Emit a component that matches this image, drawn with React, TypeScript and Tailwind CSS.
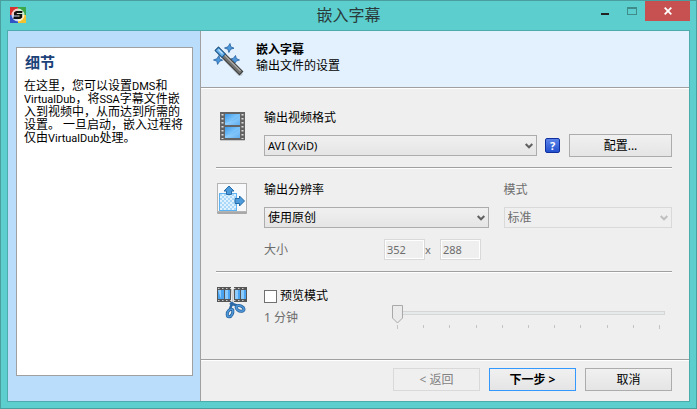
import { useState } from 'react'
import type { ReactNode, SelectHTMLAttributes, ButtonHTMLAttributes } from 'react'
import clsx from 'clsx'

const TICKS = [0, 1, 2, 3, 4, 5, 6, 7, 8, 9, 10]

function AppLogo() {
  return (
    <svg width="16" height="16" viewBox="0 0 16 16" aria-hidden="true">
      <rect width="8" height="8" fill="#d8322e" />
      <rect x="8" width="8" height="8" fill="#3aa848" />
      <rect y="8" width="8" height="8" fill="#2f52c4" />
      <rect x="8" y="8" width="8" height="8" fill="#f2c230" />
      <circle cx="8" cy="8" r="6.5" fill="#fff" opacity="0.75" />
      <path d="M12.500 4H6L4 5.500v3h5.500v1H3.800L3.300 12h6.900l2-1.600V7H6.800V6h5.300z" fill="#111" />
    </svg>
  )
}

function WandIcon() {
  return (
    <svg width="32" height="34" viewBox="0 0 32 34" aria-hidden="true">
      <path d="M7 11l20 21" stroke="#b4c0ca" strokeWidth="5" strokeLinecap="round" opacity="0.6" />
      <g fill="#4c97da" stroke="#24609f" strokeWidth="0.8">
        <path d="M17 1.500l.8 3.200 3.200 1.500-3.300 1-1.800 3.300-1-3.200L11.500 6l3.500-1.200z" />
        <path d="M6 13.500l.6 3.200 3 1.500-3 1-2 3.200-.8-3.300L.5 18l3.300-1.200z" />
        <path d="M22.500 13.500l.8 3 3.200 1.500-3.200 1-2 3-.8-3.200L17.500 17l3-.8z" />
      </g>
      <path d="M5.500 8.500l21 21" stroke="#3c3c3c" strokeWidth="5.600" strokeLinecap="square" />
      <path d="M5.500 8.500l21 21" stroke="#70706e" strokeWidth="3.600" strokeLinecap="square" />
      <path d="M7 8.500l20.500 20.500" stroke="#adadaa" strokeWidth="1.300" />
      <path d="M5.500 8.500l3.500 3.500" stroke="#1d5c96" strokeWidth="5.600" strokeLinecap="square" />
      <path d="M5.500 8.500l3.500 3.500" stroke="#69b3ea" strokeWidth="3.600" strokeLinecap="square" />
      <path d="M5.500 7.500l4 4" stroke="#c3e4fb" strokeWidth="1.300" />
    </svg>
  )
}

function FilmIcon() {
  return (
    <svg width="26" height="32" viewBox="0 0 26 32" aria-hidden="true">
      <defs>
        <linearGradient id="film" x1="0" y1="0" x2="1" y2="1">
          <stop offset="0" stopColor="#3d9bea" />
          <stop offset="0.5" stopColor="#7cc4fa" />
          <stop offset="1" stopColor="#2f8be0" />
        </linearGradient>
      </defs>
      <rect y="3" width="25" height="28" rx="1" fill="#c9c9c9" />
      <rect y="2" width="25" height="28" fill="#646464" />
      <rect x="5" y="4" width="15" height="11" fill="url(#film)" />
      <rect x="5" y="17" width="15" height="11" fill="url(#film)" />
      <path d="M5 13c6-1 11-3 15-7v9H5zM5 26c6-1 11-3 15-7v9H5z" fill="#9fd6ff" opacity="0.45" />
      <path d="M2.500 4v25M22.500 4v25" stroke="#ddd" strokeWidth="2" strokeDasharray="1.500 2.500" />
    </svg>
  )
}

function ResizeIcon() {
  return (
    <svg width="32" height="32" viewBox="0 0 32 32" aria-hidden="true">
      <defs>
        <pattern id="checker" width="4" height="4" patternUnits="userSpaceOnUse">
          <rect width="4" height="4" fill="#e0f2ff" />
          <path d="M0 0h2v2H0zM2 2h2v2H2z" fill="#aad8f8" />
        </pattern>
      </defs>
      <rect x="1" y="2" width="30" height="30" rx="1" fill="#a9a9a9" />
      <rect x="1.500" y="1.500" width="29" height="28" fill="#f7f9fa" stroke="#b4b4b4" />
      <rect x="3.500" y="11.500" width="17" height="17" fill="url(#checker)" stroke="#5eb2f0" />
      <g fill="#4d9bdb" stroke="#256ca8">
        <path d="M13 4l5 5h-2.500v3.500h-5V9H8z" />
        <path d="M28.500 19l-5 5v-2.500H19v-5h4.500V14z" />
      </g>
    </svg>
  )
}

function CutFilmIcon() {
  return (
    <svg width="32" height="34" viewBox="0 0 32 34" aria-hidden="true">
      <path d="M1 1h30v15H1z" fill="#555" />
      <path d="M2 2.500h28M2 14.500h28" stroke="#ccc" strokeDasharray="1.500 2.500" />
      <path d="M2 4h6v9H2zM9 4h5v9H9zM19 4h5v9h-5zM25 4h5v9h-5z" fill="#4aa3ee" />
      <path d="M2 4h3v9zM9 4h3v9H9zM19 4h3v9h-3zM25 4h3v9h-3z" fill="#8ccbfb" />
      <path d="M15 1h3v16h-3z" fill="#efefef" />
      <path d="M15.500 3l1.500 14M17.500 3l-1 14" stroke="#c6c6c6" />
      <path d="M16.500 16l-2.500 7M16.500 18l4.500 1.500M14 17l3 2.500" stroke="#2c69a6" strokeWidth="2.400" />
      <g fill="none">
        <path d="M16.800 24c.5 3-1.300 6.800-3.600 6.800-2.500 0-2.700-4.300-.3-6.500 1.300-1.200 3.500-1.600 3.900-.3z" stroke="#245e9a" strokeWidth="3" />
        <path d="M16.800 24c.5 3-1.300 6.800-3.600 6.800-2.500 0-2.700-4.300-.3-6.500 1.300-1.200 3.500-1.600 3.900-.3z" stroke="#4e97d8" strokeWidth="1.600" />
        <path d="M20.800 20c2.700-1.500 6.900.8 7.200 3.200.2 2.500-4.100 2.700-6.400.6-1.500-1.300-2-3-.8-3.800z" stroke="#245e9a" strokeWidth="3" />
        <path d="M20.800 20c2.700-1.500 6.900.8 7.200 3.200.2 2.500-4.100 2.700-6.400.6-1.500-1.300-2-3-.8-3.800z" stroke="#4e97d8" strokeWidth="1.600" />
      </g>
    </svg>
  )
}

function Select({ className, children, ...props }: SelectHTMLAttributes<HTMLSelectElement>) {
  return (
    <div className={clsx('relative', className)}>
      <select
        {...props}
        className="block h-[21px] w-full appearance-none border border-[#acacac] bg-linear-to-b from-[#f0f0f0] to-[#e5e5e5] pl-[3px] pr-5 leading-[19px] text-black disabled:border-[#d9d9d9] disabled:bg-none disabled:text-[#6d6d6d] disabled:opacity-100"
      >
        {children}
      </select>
      <svg
        width="8"
        height="6"
        viewBox="0 0 8 6"
        aria-hidden="true"
        className={clsx(
          'pointer-events-none absolute right-1 top-2',
          props.disabled ? 'text-[#bfbfbf]' : 'text-[#606060]',
        )}
      >
        <path d="M0.700 1L4 4.300 7.300 1" fill="none" stroke="currentColor" strokeWidth="2" />
      </svg>
    </div>
  )
}

function Button({ className, ...props }: ButtonHTMLAttributes<HTMLButtonElement>) {
  return (
    <button
      type="button"
      {...props}
      className={clsx(
        'h-[23px] border bg-linear-to-b from-[#f0f0f0] to-[#e5e5e5] leading-[21px] disabled:border-[#d9d9d9] disabled:bg-none disabled:text-[#838383]',
        className,
      )}
    />
  )
}

function Section({ icon, className, children }: { icon: ReactNode; className?: string; children: ReactNode }) {
  return (
    <section className={clsx('flex', className)}>
      <div className="w-12 shrink-0">{icon}</div>
      <div className="min-w-0 flex-1">{children}</div>
    </section>
  )
}

function Divider() {
  return <div className="h-[2px] border-t border-b border-t-[#a0a0a0] border-b-white" />
}

function TitleBar() {
  return (
    <header className="grid h-[29px] grid-cols-[1fr_auto_1fr] items-start">
      <div className="pl-[3px] pt-[6px]">
        <AppLogo />
      </div>
      <h1 className="text-[16px] leading-[28px] text-[#2b3b3b]">嵌入字幕</h1>
      <div className="flex justify-end">
        <button type="button" aria-label="最小化" className="flex h-5 w-[27px] items-center justify-center pt-[6px]">
          <span className="h-[2px] w-2 bg-[#222]" />
        </button>
        <button type="button" aria-label="最大化" disabled className="flex h-5 w-[27px] items-center justify-center">
          <span className="h-2 w-[10px] border border-t-2 border-[#3f8b89]" />
        </button>
        <button type="button" aria-label="关闭" className="flex h-5 w-[45px] items-center justify-center bg-[#c75050]">
          <svg width="8" height="8" viewBox="0 0 8 8" aria-hidden="true">
            <path d="M0.700 0.700l6.600 6.600M7.300 0.700L0.700 7.300" stroke="#fff" strokeWidth="1.800" />
          </svg>
        </button>
      </div>
    </header>
  )
}

function PreviewSlider({ disabled }: { disabled: boolean }) {
  const [minutes, setMinutes] = useState(1)
  return (
    <div className="relative flex-1 pt-[6px]">
      <div className="h-1 border border-[#d6d6d6] bg-[#e7eaea]" />
      <div className="mt-[10px] flex justify-between px-[5px]">
        {TICKS.map((tick) => (
          <span key={tick} className={clsx('w-px bg-[#c4c4c4]', tick % 10 === 0 ? 'h-1' : 'h-[3px]')} />
        ))}
      </div>
      {/* 11px thumb, so the travel is the track width minus 11px */}
      <svg
        width="11"
        height="19"
        viewBox="0 0 11 19"
        aria-hidden="true"
        className="absolute top-0"
        style={{ left: `calc((100% - 11px) * ${(minutes - 1) / 10})` }}
      >
        <path d="M.5.5h10v12.500l-5 5-5-5z" fill="#ebebeb" stroke="#a8a8a8" />
      </svg>
      <input
        type="range"
        aria-label="预览时长"
        min={1}
        max={11}
        value={minutes}
        disabled={disabled}
        onChange={(e) => setMinutes(Number(e.target.value))}
        className="absolute inset-x-0 top-0 m-0 h-5 w-full opacity-0"
      />
    </div>
  )
}

export default function App() {
  const [preview, setPreview] = useState(false)

  return (
    <div className="flex min-h-screen flex-col border border-[#4a9f9e] bg-[#5bcecd] px-[6px] pb-[6px] font-['Noto_Sans','Noto_Sans_CJK_SC',sans-serif] text-[12px] leading-4 text-black">
      <TitleBar />
      <div className="flex flex-1 border border-[#4cabab] bg-[#efefef]">
        <aside className="flex w-[193px] shrink-0 border-r border-[#a0a0a0] bg-[#b9ddfa] pt-4 pr-[7px] pb-[25px] pl-2">
          <div className="flex-1 border border-[#a0a0a0] bg-white pt-1 pl-[7px] pr-1">
            <h2 className="pl-px text-[15px] leading-5 font-bold text-[#1c4379]">细节</h2>
            <p className="mt-2 font-[Roboto,'Noto_Sans_CJK_SC',sans-serif] leading-[13px]">
              在这里，您可以设置<span className="text-[11px]">DMS</span>和
              <span className="text-[11px]">VirtualDub</span>，将<span className="text-[11px]">SSA</span>
              字幕文件嵌入到视频中，从而达到所需的设置。 一旦启动，嵌入过程将仅由
              <span className="text-[11px]">VirtualDub</span>处理。
            </p>
          </div>
        </aside>

        <main className="flex min-w-0 flex-1 flex-col">
          <div className="flex h-14 gap-[11px] bg-[#e2f1fd] pt-[11px] pl-3">
            <WandIcon />
            <div>
              <p className="font-bold">嵌入字幕</p>
              <p>输出文件的设置</p>
            </div>
          </div>
          <Divider />

          <div className="flex-1 pr-[17px] pl-[15px]">
            <Section icon={<div className="pl-[4px]"><FilmIcon /></div>} className="pt-[21px] pb-[10px]">
              <label htmlFor="format" className="block">输出视频格式</label>
              <div className="mt-2 flex items-center">
                <Select id="format" className="flex-1 text-[11px]">
                  <option>AVI (XviD)</option>
                </Select>
                <button
                  type="button"
                  aria-label="帮助"
                  className="mr-[9px] ml-2 h-[15px] w-[15px] rounded-[2px] border border-[#0f2f9e] bg-linear-to-b from-[#5b83e8] to-[#2450cf] text-[11px] leading-[13px] font-bold text-white"
                >
                  ?
                </button>
                <Button className="w-[103px] border-[#acacac]">配置...</Button>
              </div>
            </Section>
            <Divider />

            <Section icon={<ResizeIcon />} className="pt-[13px] pb-[11px]">
              <div className="grid grid-cols-[4fr_3fr] gap-x-[15px]">
                <div>
                  <label htmlFor="resolution" className="block">输出分辨率</label>
                  <Select id="resolution" className="mt-[9px]">
                    <option>使用原创</option>
                  </Select>
                </div>
                <div>
                  <label htmlFor="mode" className="block text-[#6d6d6d]">模式</label>
                  <Select id="mode" className="mt-[9px]" disabled>
                    <option>标准</option>
                  </Select>
                </div>
              </div>
              <div className="mt-[11px] flex items-center text-[#6d6d6d]">
                <label htmlFor="width" className="w-[120px]">大小</label>
                <input
                  id="width"
                  disabled
                  defaultValue="352"
                  className="h-[21px] w-[41px] border border-[#d9d9d9] bg-[#efefef] pl-[2px] text-[11px] ring-1 ring-white ring-inset"
                />
                <span className="w-[15px] text-[11px]">x</span>
                <input
                  aria-label="高度"
                  disabled
                  defaultValue="288"
                  className="h-[21px] w-[41px] border border-[#d9d9d9] bg-[#efefef] pl-[2px] text-[11px] ring-1 ring-white ring-inset"
                />
              </div>
            </Section>
            <Divider />

            <Section icon={<CutFilmIcon />} className="pt-[13px]">
              <div className="flex pr-[7px]">
                <div className="w-32 pt-[2px]">
                  <label className="flex items-center gap-[3px]">
                    <input
                      type="checkbox"
                      checked={preview}
                      onChange={(e) => setPreview(e.target.checked)}
                      className="h-[13px] w-[13px] appearance-none border border-[#707070] bg-white checked:bg-[#3e86cc]"
                    />
                    预览模式
                  </label>
                  <p className="mt-[6px] text-[#6d6d6d]">1 分钟</p>
                </div>
                <div className="flex flex-1 pt-[19px]">
                  <PreviewSlider disabled={!preview} />
                </div>
              </div>
            </Section>
          </div>

          <Divider />
          <footer className="flex justify-end gap-[9px] pt-[7px] pr-[17px] pb-[10px]">
            <Button disabled className="w-[87px]">&lt; 返回</Button>
            <Button className="w-[87px] border-[#3399ff] font-bold">下一步 &gt;</Button>
            <Button className="w-[87px] border-[#acacac]">取消</Button>
          </footer>
        </main>
      </div>
    </div>
  )
}
